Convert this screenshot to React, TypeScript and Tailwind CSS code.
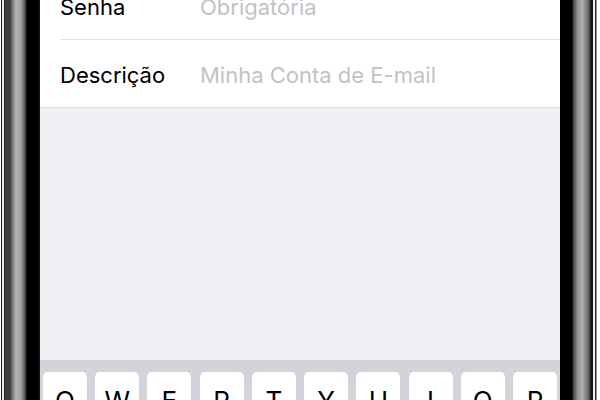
const keys = ["Q", "W", "E", "R", "T", "Y", "U", "I", "O", "P"];

const fields = [
  { label: "Senha", placeholder: "Obrigatória", first: true },
  { label: "Descrição", placeholder: "Minha Conta de E-mail", first: false },
];

const App = () => {
  return (
    <div className="w-[600px] h-[400px] flex overflow-hidden bg-white font-['Inter',sans-serif]">
      <div className="w-[40px] h-full shrink-0 bg-[linear-gradient(to_right,#fff_0px,#fff_1px,#1a1a1a_1px,#1a1a1a_2px,#e8e8e8_2px,#e8e8e8_4px,#222_4px,#222_5px,#3c3c3c_5px,#3c3c3c_10px,#6f6f6f_12px,#b4b4b4_16px,#a0a0a0_21px,#555_25px,#000_27px,#000_38px,#1c1c1c_40px)]"></div>
      <div className="flex-1 flex flex-col bg-[#efeff4] min-w-0">
        <div className="bg-white border-b border-[#dcdce0]">
          {fields.map((item) => (
            <div
              key={item.label}
              className={`ml-[20px] h-[67px] flex items-center pt-[3px] text-[22px] ${
                item.first ? "-mt-[27px] border-b border-[#e2e2e5]" : ""
              }`}
            >
              <span className="w-[140px] text-black">{item.label}</span>
              <span className="text-[#c2c2c7]">{item.placeholder}</span>
            </div>
          ))}
        </div>
        <div className="flex-1"></div>
        <div className="h-[40px] shrink-0 bg-[#d2d4da] pt-[12px] px-[3px] flex justify-between">
          {keys.map((key) => (
            <div
              key={key}
              className="w-[44px] h-[46px] rounded-[5px] bg-white shadow-[0_1px_0_#8e8f93] flex justify-center pt-[16px] text-[26px] leading-none text-black"
            >
              {key}
            </div>
          ))}
        </div>
      </div>
      <div className="w-[40px] h-full shrink-0 bg-[linear-gradient(to_right,#000_0px,#000_12px,#3a3a3a_13px,#8a8a8a_17px,#b0b0b0_22px,#7a7a7a_27px,#444_30px,#111_31px,#111_33px,#f2f2f2_33px,#f2f2f2_35px,#2a2a2a_35px,#2a2a2a_36px,#fff_37px,#fff_40px)]"></div>
    </div>
  );
};

export default App;
